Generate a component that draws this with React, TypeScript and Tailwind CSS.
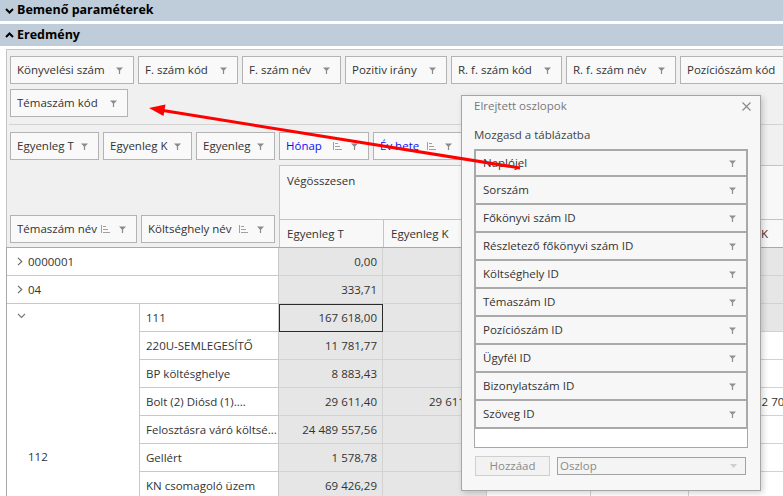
import React from "react";

function FilterIcon({ color = "#8a8a8a" }: { color?: string }) {
  return (
    <svg width="7" height="7" viewBox="0 0 7 7" className="shrink-0">
      <path d="M0 0.5h7L4.1 3.6V7H2.9V3.6z" fill={color} />
    </svg>
  );
}

function SortIcon() {
  return (
    <svg width="9" height="8" viewBox="0 0 9 8" className="shrink-0" stroke="#a0a0a0" strokeWidth="1" fill="none">
      <path d="M0.5 0v8M2 1.5h3M2 4.5h5M2 7.5h7" />
    </svg>
  );
}

function Chevron({ dir }: { dir: "down" | "up" | "right" }) {
  if (dir === "right")
    return (
      <svg width="6" height="9" viewBox="0 0 6 9" fill="none" stroke="#666" strokeWidth="1.1">
        <path d="M1 0.8l3.8 3.7L1 8.2" />
      </svg>
    );
  if (dir === "up")
    return (
      <svg width="9" height="6" viewBox="0 0 9 6" fill="none" stroke="#000" strokeWidth="2">
        <path d="M1 5l3.5-3.5L8 5" />
      </svg>
    );
  return (
    <svg width="9" height="6" viewBox="0 0 9 6" fill="none" stroke="#000" strokeWidth="2">
      <path d="M1 1l3.5 3.5L8 1" />
    </svg>
  );
}

function Chip({ label, w, sort, blue }: { label: string; w: string; sort?: boolean; blue?: boolean }) {
  return (
    <div
      className={`${w} h-[28px] shrink-0 border border-[#b3b3b3] bg-[#f9f9f9] flex items-center pl-[6px] pr-[10px] ${
        blue ? "text-[#1010f0]" : "text-[#333]"
      }`}
    >
      <span className="flex-1 whitespace-nowrap overflow-hidden">{label}</span>
      {sort && (
        <span className="ml-[3px] mr-[9px]">
          <SortIcon />
        </span>
      )}
      <FilterIcon />
    </div>
  );
}

const topChips = [
  { label: "Könyvelési szám", w: "w-[124px]" },
  { label: "F. szám kód", w: "w-[100px]" },
  { label: "F. szám név", w: "w-[99px]" },
  { label: "Pozitiv irány", w: "w-[102px]" },
  { label: "R. f. szám kód", w: "w-[111px]" },
  { label: "R. f. szám név", w: "w-[110px]" },
  { label: "Pozíciószám kód", w: "w-[130px]" },
];

const colChips = [
  { label: "Egyenleg T", w: "w-[89px]" },
  { label: "Egyenleg K", w: "w-[89px]" },
  { label: "Egyenleg", w: "w-[79px]" },
  { label: "Hónap", w: "w-[90px]", sort: true, blue: true },
  { label: "Év hete", w: "w-[90px]", sort: true, blue: true },
];

const valCols = ["w-[104px]", "w-[104px]", "w-[104px]", "w-[98px]", "w-[124px]"];

const groupRows = [
  { name: "111", v: ["167 618,00", "", "", "", ""], sel: true },
  { name: "220U-SEMLEGESÍTŐ", v: ["11 781,77", "", "", "", ""] },
  { name: "BP költésghelye", v: ["8 883,43", "", "", "", ""] },
  { name: "Bolt (2) Diósd (1)....", v: ["29 611,40", "29 611,40", "", "", "2 700,00"] },
  { name: "Felosztásra váró költsé...", v: ["24 489 557,56", "", "", "", ""] },
  { name: "Gellért", v: ["1 578,78", "", "", "", ""] },
  { name: "KN csomagoló üzem", v: ["69 426,29", "", "", "", ""] },
  { name: "Lakatos", v: ["", "", "", "", ""] },
];

const hidden = [
  "Naplójel",
  "Sorszám",
  "Főkönyvi szám ID",
  "Részletező főkönyvi szám ID",
  "Költséghely ID",
  "Témaszám ID",
  "Pozíciószám ID",
  "Ügyfél ID",
  "Bizonylatszám ID",
  "Szöveg ID",
];

function ValueCells({ values, row, sel }: { values: string[]; row: number; sel?: boolean }) {
  return (
    <>
      {values.map((v, i) => {
        const gray = i < 2 || (i === 4 && row < 3);
        return (
          <div
            key={i}
            className={`${valCols[i]} shrink-0 h-full flex items-center justify-end pr-[5px] border-b border-r border-[#d2d2d2] whitespace-nowrap ${
              gray ? "bg-[#e6e6e6]" : "bg-white"
            } ${sel && i === 0 ? "outline outline-[#2a2a2a] -outline-offset-1" : ""}`}
          >
            {v}
          </div>
        );
      })}
    </>
  );
}

export default function App() {
  return (
    <div className="relative w-[783px] h-[496px] overflow-hidden bg-white font-['Open_Sans','Noto_Sans',sans-serif] text-[11.5px] text-[#333]">
      {/* section headers */}
      <div className="h-[21px] bg-[#bfccd9] flex items-center pl-[5px] gap-[3px] font-bold text-[12.5px] text-black">
        <Chevron dir="down" />
        <span>Bemenő paraméterek</span>
      </div>
      <div className="h-[22px] mt-[3px] bg-[#bfccd9] flex items-center pl-[5px] gap-[3px] font-bold text-[12.5px] text-black">
        <Chevron dir="up" />
        <span>Eredmény</span>
      </div>

      {/* pivot panel */}
      <div className="ml-[6px] mt-[3px] w-[800px] h-[460px] border border-[#c6c6c6] bg-[#f0f0f0]">
        <div className="pt-[6px] pl-[3px]">
          <div className="flex gap-1">
            {topChips.map((c) => (
              <Chip key={c.label} label={c.label} w={c.w} />
            ))}
          </div>
          <div className="flex gap-1 mt-[5px]">
            <Chip label="Témaszám kód" w="w-[118px]" />
          </div>
        </div>
        <div className="mt-[7px] ml-[2px] h-px bg-[#d3d3d3]" />

        <div className="flex gap-1 mt-[7px] pl-[3px]">
          {colChips.map((c) => (
            <Chip key={c.label} label={c.label} w={c.w} sort={c.sort} blue={c.blue} />
          ))}
        </div>

        {/* header area */}
        <div className="flex">
          <div className="w-[272px] h-[87px] shrink-0 flex items-end gap-1 pl-[3px] pb-[4px]">
            <Chip label="Témaszám név" w="w-[127px]" sort />
            <Chip label="Költséghely név" w="w-[134px]" sort />
          </div>
          <div className="pt-[5px]">
            <div className="h-[55px] w-[534px] border-t border-l border-b border-[#c4c4c4] bg-[#f8f8f8] px-[7px] pt-[6px]">
              Végösszesen
            </div>
            <div className="flex h-[27px]">
              {["Egyenleg T", "Egyenleg K", "Egyenleg", "Egyenleg T", "Egyenleg K"].map((h, i) => (
                <div
                  key={i}
                  className={`${valCols[i]} shrink-0 flex items-center border-l border-[#c4c4c4] bg-[#f8f8f8] whitespace-nowrap ${
                    i === 4 ? "justify-end pr-[45px]" : "pl-[7px]"
                  }`}
                >
                  {h}
                </div>
              ))}
            </div>
          </div>
        </div>

        {/* data rows */}
        <div className="border-t border-l border-[#a9a9a9] -ml-px">
          {[
            { name: "0000001", v: ["0,00", "", "", "", ""] },
            { name: "04", v: ["333,71", "", "", "", ""] },
          ].map((r, ri) => (
            <div key={r.name} className="flex h-[28px]">
              <div className="w-[272px] shrink-0 bg-white border-b border-r border-[#c8c8c8] flex items-center pl-[10px] gap-[5px]">
                <Chevron dir="right" />
                <span>{r.name}</span>
              </div>
              <ValueCells values={r.v} row={ri} />
            </div>
          ))}
          <div className="flex">
            <div className="w-[133px] shrink-0 bg-white border-r border-[#c8c8c8]">
              <div className="h-[24px] flex items-center pl-[10px]">
                <svg width="9" height="6" viewBox="0 0 9 6" fill="none" stroke="#777" strokeWidth="1.1">
                  <path d="M1 1l3.5 3.5L8 1" />
                </svg>
              </div>
              <div className="h-[28px] mt-[115px] flex items-center pl-[21px]">112</div>
            </div>
            <div className="flex flex-col">
              {groupRows.map((r, i) => (
                <div key={r.name} className="flex h-[28px]">
                  <div className="w-[139px] shrink-0 bg-white border-b border-r border-[#c8c8c8] flex items-center pl-[6px] whitespace-nowrap overflow-hidden">
                    {r.name}
                  </div>
                  <ValueCells values={r.v} row={i + 2} sel={r.sel} />
                </div>
              ))}
            </div>
          </div>
        </div>
      </div>

      {/* hidden columns popup */}
      <div className="absolute left-[461px] top-[95px] w-[300px] h-[396px] border border-[#a6a6a6] bg-[#f7f7f7] shadow-[2px_2px_6px_rgba(0,0,0,0.18)]">
        <div className="h-[20px] flex items-center justify-between pl-[12px] pr-[9px] text-[#777]">
          <span>Elrejtett oszlopok</span>
          <svg width="9" height="9" viewBox="0 0 9 9" stroke="#888" strokeWidth="1.1">
            <path d="M0.5 0.5l8 8M8.5 0.5l-8 8" />
          </svg>
        </div>
        <div className="h-[18px] mt-[10px] flex items-center pl-[12px] text-[#444]">Mozgasd a táblázatba</div>
        <div className="ml-[12px] mt-[5px] w-[274px] border-x border-b border-[#a8a8a8] bg-white pb-[18px]">
          {hidden.map((h, i) => (
            <div
              key={h}
              className={`h-[28px] -mx-px flex items-center justify-between pl-[7px] pr-[10px] bg-[#f7f7f7] border-x-2 border-b-2 border-[#a9a9a9] ${
                i === 0 ? "border-t-2" : ""
              }`}
            >
              <span>{h}</span>
              <FilterIcon color="#909090" />
            </div>
          ))}
        </div>
        <div className="flex items-start gap-[7px] ml-[13px] mt-[8px]">
          <div className="w-[75px] h-[20px] border border-[#cfcfcf] bg-[#f2f2f2] flex items-center justify-center text-[#8a8a8a]">
            Hozzáad
          </div>
          <div className="w-[189px] h-[18px] mt-px border border-[#a2a2a2] bg-[#f4f4f4] flex items-center justify-between pl-[2px] pr-[8px] text-[#8a8a8a]">
            <span>Oszlop</span>
            <svg width="7" height="4" viewBox="0 0 7 4">
              <path d="M0 0h7L3.5 4z" fill="#cfcfcf" />
            </svg>
          </div>
        </div>
      </div>

      {/* red arrow annotation */}
      <svg className="absolute left-0 top-0 pointer-events-none" width="783" height="496" viewBox="0 0 783 496">
        <line x1="520" y1="168" x2="160" y2="110" stroke="#ff0000" strokeWidth="3" />
        <polygon points="149,108 165.5,104.5 163.5,116" fill="#ff0000" />
      </svg>
    </div>
  );
}
